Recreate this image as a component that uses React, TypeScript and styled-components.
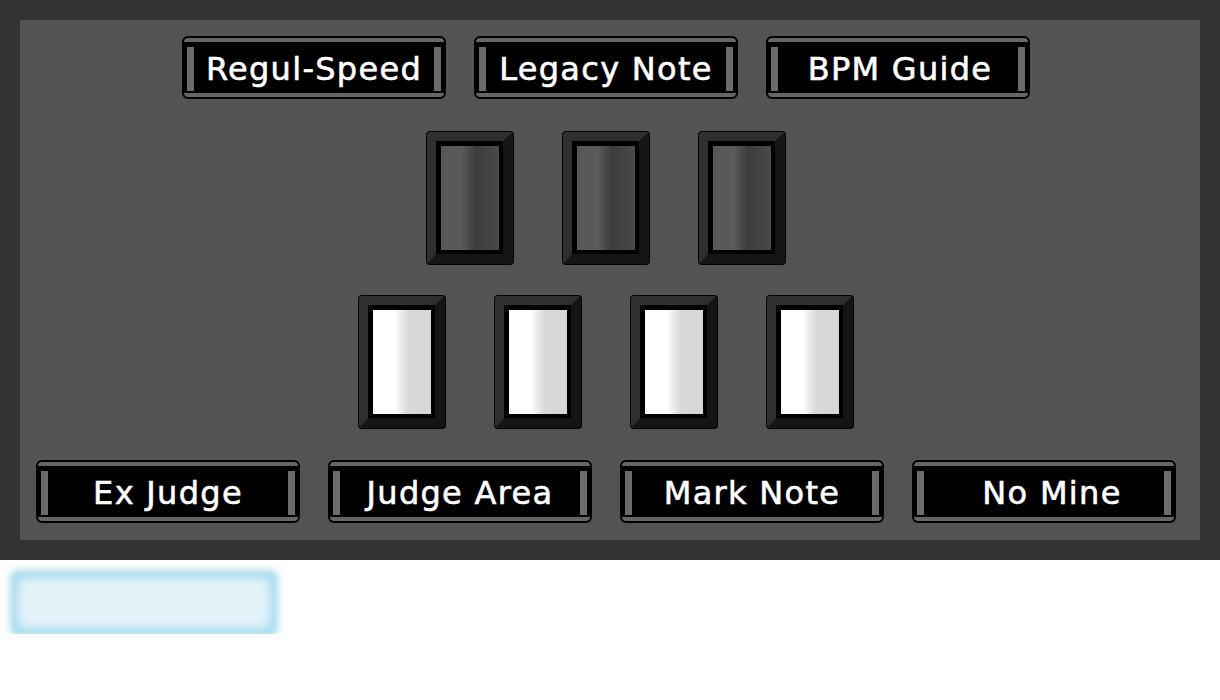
import React from "react";
import styled, { createGlobalStyle } from "styled-components";

const Global = createGlobalStyle`
  html, body { margin: 0; padding: 0; background: #fff; }
  body { font-family: "DejaVu Sans", Lato, sans-serif; }
`;

const Outer = styled.div`
  background: #333333;
  padding: 20px;
  height: 560px;
  box-sizing: border-box;
`;

const Panel = styled.div`
  background: #535353;
  height: 520px;
  box-sizing: border-box;
  padding: 16px 8px 17px 0;
  display: flex;
  flex-direction: column;
  align-items: center;
`;

const Row = styled.div<{ $gap: number; $mt: number }>`
  display: flex;
  justify-content: center;
  gap: ${(p) => p.$gap}px;
  margin-top: ${(p) => p.$mt}px;
`;

const Btn = styled.div`
  width: 264px;
  height: 63px;
  box-sizing: border-box;
  border: 2px solid #000;
  border-radius: 6px;
  background: #000;
  display: flex;
  overflow: hidden;
`;

const BtnInner = styled.div`
  flex: 1;
  display: flex;
  align-items: stretch;
  border-top: 4px solid #666;
  border-bottom: 4px solid #666;
  border-radius: 3px;
  background: #000;
  padding: 5px 3px 2px;
`;

const Bar = styled.div`
  width: 7px;
  background: #6b6b6b;
`;

const Label = styled.div<{ $shift?: number }>`
  flex: 1;
  display: flex;
  align-items: center;
  justify-content: center;
  color: #fff;
  font-family: "DejaVu Sans", Lato, sans-serif;
  font-weight: normal;
  font-size: 32px;
  letter-spacing: 1.3px;
  -webkit-text-stroke: 0.6px #fff;
  padding-left: ${(p) => p.$shift ?? 0}px;
  margin-top: -1px;
  white-space: nowrap;
`;

const KeyFrame = styled.div`
  width: 88px;
  height: 134px;
  box-sizing: border-box;
  background: #000;
  border-radius: 4px;
  padding: 1px;
`;

const Bevel = styled.div`
  height: 100%;
  box-sizing: border-box;
  border-style: solid;
  border-width: 9px 10px 10px 9px;
  border-color: #2f2f2f #151515 #151515 #2f2f2f;
  border-radius: 3px;
`;

const Face = styled.div<{ $white?: boolean }>`
  height: 100%;
  box-sizing: border-box;
  border-style: solid;
  border-color: #000;
  border-width: 5px 4px 4px 5px;
  background: ${(p) =>
    p.$white
      ? "linear-gradient(to right, #ffffff 0%, #ffffff 38%, #e6e6e6 52%, #d8d8d8 62%, #d7d7d7 100%)"
      : "linear-gradient(to right, #575757 0%, #5b5b5b 35%, #3c3c3c 60%, #434343 80%, #4a4a4a 100%)"};
`;

const Glow = styled.div`
  margin: 12px 0 0 12px;
  width: 264px;
  height: 62px;
  box-sizing: border-box;
  border: 4px solid #8fd1e8;
  border-radius: 4px;
  background: #e5f3f9;
  box-shadow: inset 0 0 12px #a9dcef, 0 0 6px #98d5eb;
  filter: blur(3.5px);
`;

const Button = ({ text, shift }: { text: string; shift?: number }) => (
  <Btn>
    <BtnInner>
      <Bar />
      <Label $shift={shift}>{text}</Label>
      <Bar />
    </BtnInner>
  </Btn>
);

const Key = ({ white }: { white?: boolean }) => (
  <KeyFrame>
    <Bevel>
      <Face $white={white} />
    </Bevel>
  </KeyFrame>
);

export default function App() {
  return (
    <>
      <Global />
      <Outer>
        <Panel>
          <Row $gap={28} $mt={0}>
            <Button text="Regul-Speed" />
            <Button text="Legacy Note" />
            <Button text="BPM Guide" shift={4} />
          </Row>
          <Row $gap={48} $mt={32}>
            <Key />
            <Key />
            <Key />
          </Row>
          <Row $gap={48} $mt={30}>
            <Key white />
            <Key white />
            <Key white />
            <Key white />
          </Row>
          <Row $gap={28} $mt={31}>
            <Button text="Ex Judge" />
            <Button text="Judge Area" />
            <Button text="Mark Note" />
            <Button text="No Mine" shift={16} />
          </Row>
        </Panel>
      </Outer>
      <Glow />
    </>
  );
}
